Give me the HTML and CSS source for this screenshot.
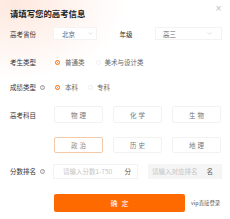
FILE: index.html
```html
<!DOCTYPE html>
<html lang="zh-CN">
<head>
<meta charset="utf-8">
<link rel="stylesheet" href="styles.css">
</head>
<body>
<div class="panel">
  <div class="title">请填写您的高考信息</div>
  <span class="close">×</span>

  <div class="row r1">
    <div class="label">高考省份</div>
    <div class="select s1"><span>北京</span><svg class="chev" viewBox="0 0 6 4" width="5" height="3"><path d="M0.5 0.5 L3 3 L5.5 0.5" fill="none" stroke="#ccc" stroke-width="0.8"/></svg></div>
    <div class="mid-label">年级</div>
    <div class="select s2"><span>高三</span><svg class="chev" viewBox="0 0 6 4" width="5" height="3"><path d="M0.5 0.5 L3 3 L5.5 0.5" fill="none" stroke="#ccc" stroke-width="0.8"/></svg></div>
  </div>

  <div class="row r2">
    <div class="label">考生类型</div>
    <div class="radios">
      <span class="radio on"></span><span class="opt">普通类</span>
      <span class="radio off g2"></span><span class="opt">美术与设计类</span>
    </div>
  </div>

  <div class="row r3">
    <div class="label">成绩类型<span class="help">?</span></div>
    <div class="radios">
      <span class="radio on"></span><span class="opt">本科</span>
      <span class="radio off g3"></span><span class="opt">专科</span>
    </div>
  </div>

  <div class="row r4">
    <div class="label sub-label">高考科目</div>
    <div class="subjects">
      <div class="subj">物理</div>
      <div class="subj">化学</div>
      <div class="subj">生物</div>
      <div class="subj sel">政治</div>
      <div class="subj">历史</div>
      <div class="subj">地理</div>
    </div>
  </div>

  <div class="row r6">
    <div class="label">分数排名<span class="help">?</span></div>
    <div class="input i1"><span class="ph">请输入分数1-750</span><span class="unit">分</span></div>
    <div class="input i2"><span class="ph">请输入对应排名</span><span class="unit">名</span></div>
  </div>

  <div class="row r7">
    <div class="btn">确定</div>
    <div class="vip">vip直接登录</div>
  </div>
</div>
</body>
</html>
```
FILE: styles.css
```css
html, body {
  margin: 0;
  padding: 0;
  background: #fff;
}
body {
  font-family: "Noto Sans CJK SC", "Noto Sans", sans-serif;
  width: 230px;
  height: 219px;
  overflow: hidden;
}
.panel {
  position: relative;
  width: 230px;
  height: 219px;
  box-sizing: border-box;
  padding: 7px 8px 0 10px;
  background:
    radial-gradient(ellipse 110px 75px at 15px 5px, rgba(253, 214, 196, 0.55), rgba(255, 255, 255, 0) 100%),
    #fff;
}
.title {
  height: 12px;
  line-height: 12px;
  font-size: 8.4px;
  font-weight: 700;
  color: #222;
}
.close {
  position: absolute;
  top: 4px;
  right: 8px;
  font-size: 8px;
  line-height: 10px;
  color: #bbb;
  font-family: "DejaVu Sans", sans-serif;
}
.row {
  display: flex;
  align-items: center;
}
.label {
  width: 43px;
  flex: none;
  font-size: 6.5px;
  color: #333;
  display: flex;
  align-items: center;
}
.help {
  width: 5px;
  height: 5px;
  border: 0.6px solid #999;
  border-radius: 50%;
  font-size: 4px;
  line-height: 5px;
  text-align: center;
  color: #999;
  margin-left: 4px;
  box-sizing: border-box;
  display: inline-flex;
  align-items: center;
  justify-content: center;
}
.r1 { height: 13px; margin-top: 8px; }
.r2 { height: 13px; margin-top: 15.5px; }
.r3 { height: 13px; margin-top: 12px; }
.r4 { margin-top: 12.5px; align-items: flex-start; }
.r6 { height: 15px; margin-top: 11px; }
.r7 { height: 18px; margin-top: 15.5px; padding-left: 44px; }

.select {
  height: 13px;
  box-sizing: border-box;
  border: 1px solid #f3f3f3;
  background: #fff;
  display: flex;
  align-items: center;
  justify-content: space-between;
  font-size: 6.5px;
  color: #666;
}
.s1 { width: 44px; padding: 0 3px 0 8px; }
.s2 { width: 67px; padding: 0 9px 0 7px; }
.mid-label {
  width: 58px;
  text-align: center;
  font-size: 6.5px;
  color: #333;
}
.chev { display: block; }

.radios {
  display: flex;
  align-items: center;
  font-size: 6.5px;
  color: #666;
  padding-left: 2px;
}
.radio {
  width: 5px;
  height: 5px;
  border-radius: 50%;
  box-sizing: border-box;
  margin-right: 5px;
  position: relative;
}
.radio.on {
  border: 1px solid #ff6a00;
}
.radio.on::after {
  content: "";
  position: absolute;
  left: 1px;
  top: 1px;
  width: 1.2px;
  height: 1.2px;
  border-radius: 50%;
  background: #ff6a00;
}
.radio.off {
  border: 0.6px solid #eee;
  margin-right: 4px;
}
.g2 { margin-left: 11px; }
.g3 { margin-left: 10px; }
.opt { line-height: 13px; }

.sub-label { height: 17px; }
.subjects {
  display: grid;
  grid-template-columns: repeat(3, 49px);
  grid-template-rows: 17px 16px;
  column-gap: 10px;
  row-gap: 13.5px;
  margin-left: 1px;
}
.subj {
  box-sizing: border-box;
  border: 1px solid #f2f2f2;
  border-radius: 2px;
  display: flex;
  align-items: center;
  justify-content: center;
  font-size: 6.5px;
  letter-spacing: 2px;
  padding-left: 2px;
  color: #777;
  background: #fff;
}
.subj.sel {
  border-color: #f3c9a8;
  color: #888;
}

.input {
  height: 15px;
  box-sizing: border-box;
  display: flex;
  align-items: center;
  justify-content: space-between;
  font-size: 6.5px;
}
.i1 {
  width: 85px;
  border: 1px solid #f3f3f3;
  padding: 0 6px 0 9px;
  background: #fff;
}
.i2 {
  width: 74px;
  margin-left: 10px;
  background: #f5f5f5;
  padding: 0 9px 0 4px;
}
.ph { color: #c4c4c4; }
.unit { color: #555; }

.btn {
  width: 131px;
  height: 18px;
  background: #ff6a00;
  border-radius: 2px;
  color: #fff;
  font-size: 7px;
  letter-spacing: 4px;
  padding-left: 4px;
  box-sizing: border-box;
  display: flex;
  align-items: center;
  justify-content: center;
}
.vip {
  margin-left: 6px;
  font-size: 5.4px;
  color: #555;
}
```
